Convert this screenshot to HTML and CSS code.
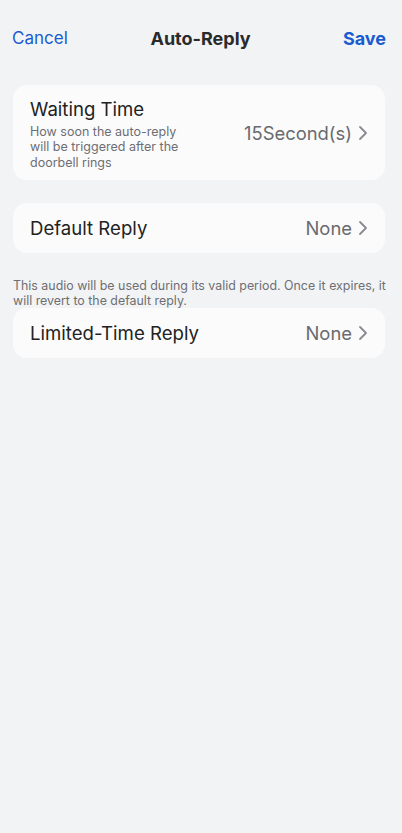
FILE: index.html
```html
<!DOCTYPE html>
<html lang="en">
<head>
    <meta charset="UTF-8">
    <meta name="viewport" content="width=device-width, initial-scale=1.0">
    <title>Auto-Reply</title>
    <link rel="stylesheet" href="styles.css">
</head>
<body>

<div class="top-bar">
    <span class="bar-btn">Cancel</span>
    <span class="bar-title">Auto-Reply</span>
    <span class="bar-btn save">Save</span>
</div>

<div class="content">
    <div class="card tall">
        <div class="item-text">
            <div class="item-title">Waiting Time</div>
            <div class="item-desc">How soon the auto-reply will be triggered after the doorbell rings</div>
        </div>
        <div class="item-value">15Second(s)
            <svg class="chevron" viewBox="0 0 10 16" width="10" height="16"><path d="M2 2l6 6-6 6" fill="none" stroke="#8a8a8f" stroke-width="1.8" stroke-linecap="round" stroke-linejoin="round"/></svg>
        </div>
    </div>

    <div class="card">
        <div class="item-title">Default Reply</div>
        <div class="item-value">None
            <svg class="chevron" viewBox="0 0 10 16" width="10" height="16"><path d="M2 2l6 6-6 6" fill="none" stroke="#8a8a8f" stroke-width="1.8" stroke-linecap="round" stroke-linejoin="round"/></svg>
        </div>
    </div>

    <p class="note">This audio will be used during its valid period. Once it expires, it will revert to the default reply.</p>

    <div class="card">
        <div class="item-title">Limited-Time Reply</div>
        <div class="item-value">None
            <svg class="chevron" viewBox="0 0 10 16" width="10" height="16"><path d="M2 2l6 6-6 6" fill="none" stroke="#8a8a8f" stroke-width="1.8" stroke-linecap="round" stroke-linejoin="round"/></svg>
        </div>
    </div>
</div>

</body>
</html>
```

FILE: styles.css
```css
/* Основни настройки */
body {
    margin: 0;
    padding: 0;
    background-color: #f2f3f5;
    color: #222222;
    font-family: Inter, "Noto Sans", sans-serif;
    height: 833px;
}

.top-bar {
    display: grid;
    grid-template-columns: 1fr auto 1fr;
    align-items: center;
    height: 36px;
    padding: 20px 16px 0 12px;
}

.bar-btn {
    font-size: 17px;
    color: #1a5bd0;
}

.bar-btn.save {
    font-size: 18px;
    font-weight: 700;
    text-align: right;
}

.bar-title {
    font-size: 18px;
    font-weight: 700;
    color: #2a2a2a;
    margin-left: 3px;
}

.content {
    padding: 29px 17px 0 13px;
}

.card {
    display: flex;
    justify-content: space-between;
    align-items: center;
    background-color: #fbfbfc;
    border-radius: 14px;
    height: 50px;
    padding: 0 17px;
    margin-bottom: 23px;
}

.card.tall {
    height: 95px;
}

.item-text {
    display: flex;
    flex-direction: column;
    padding-top: 3px;
}

.item-title {
    font-size: 18.6px;
    line-height: 23px;
    color: #222222;
}

.item-desc {
    font-size: 12.5px;
    line-height: 15.5px;
    color: #6e6e73;
    width: 155px;
    margin-top: 3px;
}

.item-value {
    display: flex;
    align-items: center;
    gap: 6px;
    font-size: 18.4px;
    color: #6a6a6e;
}

.note {
    font-size: 12.4px;
    line-height: 15px;
    color: #6e6e73;
    width: 375px;
    margin: 25px 0 0;
}
```
